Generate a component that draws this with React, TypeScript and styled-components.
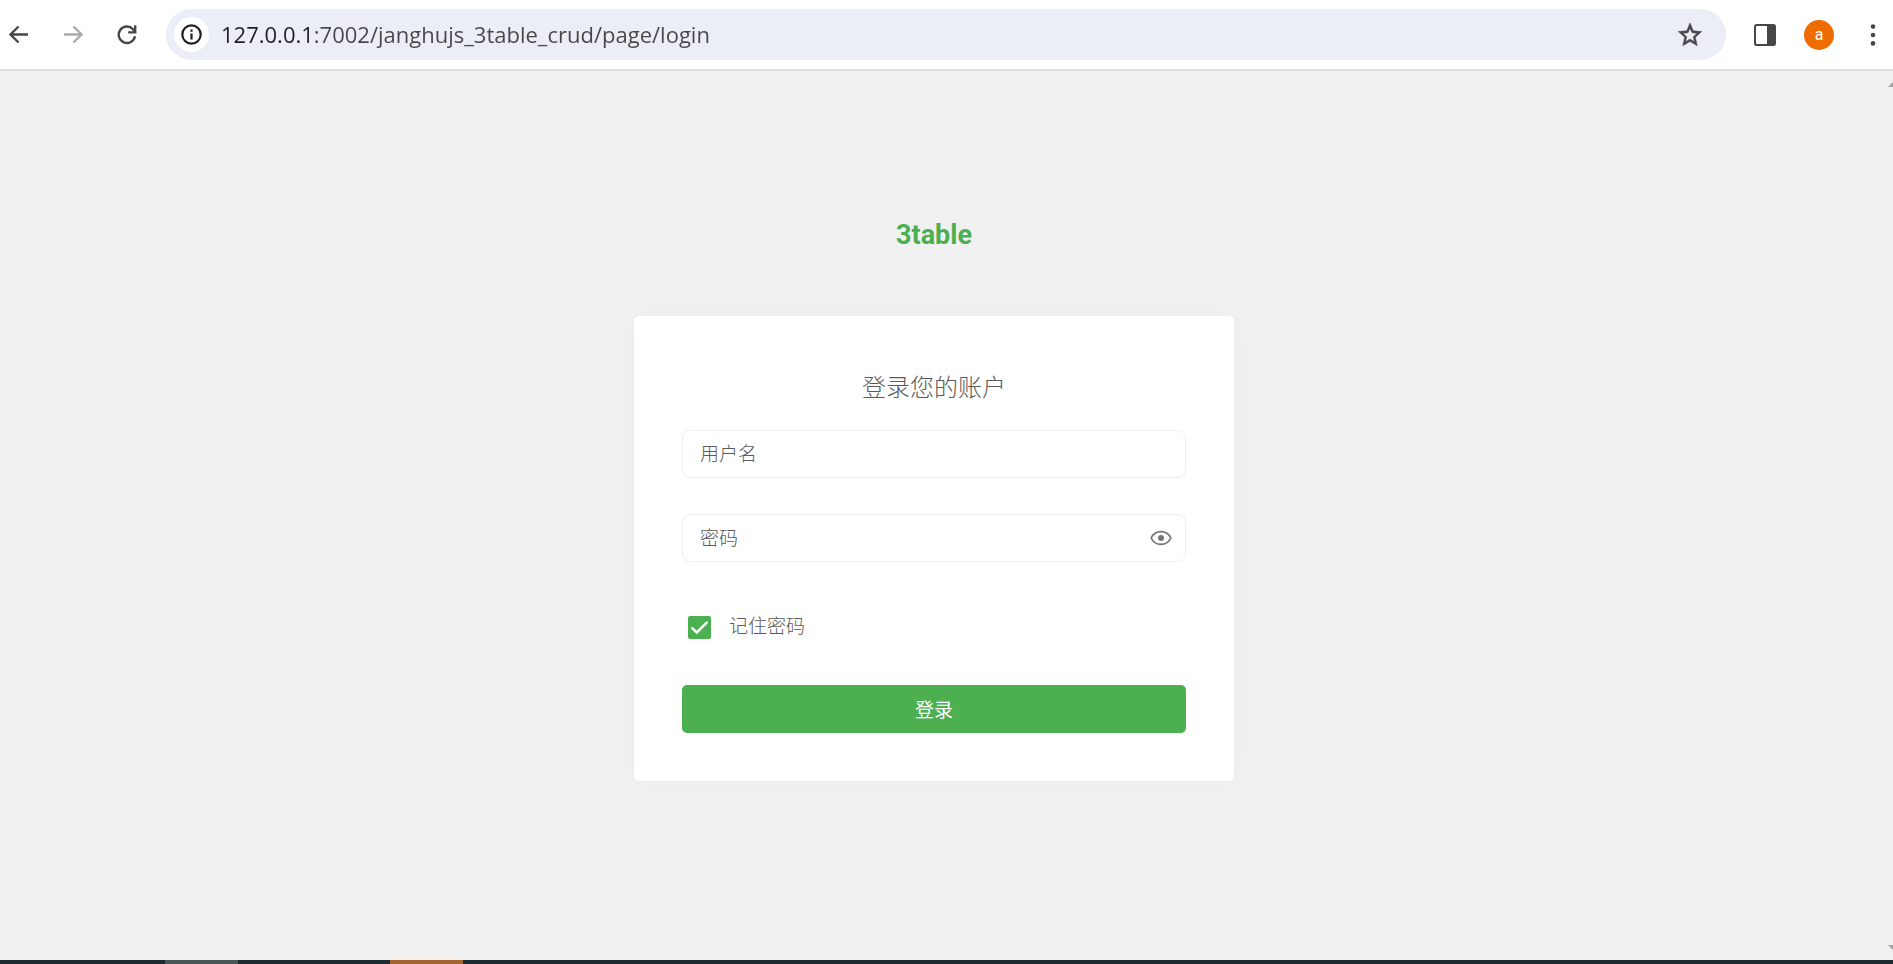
import React, { useState } from "react";
import styled, { createGlobalStyle } from "styled-components";

const GlobalStyle = createGlobalStyle`
  *, *::before, *::after { box-sizing: border-box; }
  html, body, #root { height: 100%; }
  body {
    margin: 0;
    background: #f1f1f1;
    color: #757575;
    font-family: Roboto, "Noto Sans CJK SC", sans-serif;
  }
  button, input { font: inherit; color: inherit; }
`;

const Browser = styled.div`
  display: flex;
  flex-direction: column;
  min-height: 100%;
`;

const Toolbar = styled.header`
  display: flex;
  align-items: center;
  gap: 24px;
  padding: 9px 5px 9px 4px;
  background: #fff;
  border-bottom: 2px solid #dfdfdf;
`;

const IconButton = styled.button<{ $muted?: boolean }>`
  display: flex;
  align-items: center;
  justify-content: center;
  flex: none;
  width: 30px;
  height: 30px;
  padding: 0;
  border: 0;
  background: none;
  color: ${(p) => (p.$muted ? "#ababab" : "#474747")};
  cursor: pointer;
`;

const Avatar = styled(IconButton)`
  border-radius: 50%;
  background: #ef6c00;
  color: #fff;
  font-size: 16px;
  line-height: 30px;
`;

const AddressBar = styled.div`
  display: flex;
  align-items: center;
  flex: 1;
  min-width: 0;
  height: 51px;
  padding: 0 21px 0 8px;
  border-radius: 26px;
  background: #ebeef7;
`;

const SiteInfo = styled(IconButton)`
  width: 35px;
  height: 35px;
  border-radius: 50%;
  background: #fff;
  color: #1f1f1f;
`;

const Address = styled.input`
  flex: 1;
  min-width: 0;
  height: 35px;
  margin: 0 12px;
  padding: 0 0 2px;
  border: 0;
  outline: 0;
  background: linear-gradient(to right, #1f1f1f 93px, #474747 93px);
  background-clip: text;
  -webkit-background-clip: text;
  color: transparent;
  font-family: "Open Sans", sans-serif;
  font-size: 22px;
`;

const Viewport = styled.div`
  display: flex;
  flex: 1;
`;

const Page = styled.main`
  display: flex;
  flex: 1;
  flex-direction: column;
  align-items: center;
  padding: 144px 13px 48px 0;
`;

const ScrollRail = styled.div`
  display: flex;
  flex-direction: column;
  justify-content: space-between;
  align-items: flex-end;
  width: 12px;
  padding: 11px 0 10px;
  background: #f0f0f0;
`;

const Brand = styled.h1`
  margin: 0 0 61px;
  color: #4caf50;
  font-size: 27px;
  font-weight: 700;
  line-height: 40px;
`;

const Card = styled.form`
  display: flex;
  flex-direction: column;
  width: 600px;
  max-width: 100%;
  padding: 48px;
  border-radius: 5px;
  background: #fff;
  box-shadow: 0 0 36px rgba(0, 0, 0, 0.03);
`;

const CardTitle = styled.h2`
  margin: 0 0 18px;
  color: #5a5a5a;
  font-size: 24px;
  font-weight: 300;
  line-height: 48px;
  text-align: center;
`;

const Field = styled.div`
  display: flex;
  align-items: center;
  height: 48px;
  margin-bottom: 36px;
  padding: 0 9px 0 17px;
  border: 1px solid #eee;
  border-radius: 8px;
`;

const TextInput = styled.input`
  flex: 1;
  min-width: 0;
  height: 40px;
  padding: 0;
  border: 0;
  outline: 0;
  background: none;
  font-size: 19px;
  font-weight: 300;
  &::placeholder {
    color: #5a5a5a;
    opacity: 1;
  }
`;

const EyeButton = styled(IconButton)`
  color: #757575;
`;

const Remember = styled.label`
  display: flex;
  align-items: center;
  gap: 18px;
  height: 40px;
  margin: 9px 0 38px;
  padding-left: 6px;
  color: #5a5a5a;
  font-size: 19px;
  font-weight: 300;
  line-height: 24px;
  cursor: pointer;
`;

const CheckBox = styled.span`
  display: grid;
  width: 23px;
  height: 23px;
  & > * {
    grid-area: 1 / 1;
  }
  svg {
    pointer-events: none;
  }
`;

const CheckInput = styled.input`
  appearance: none;
  width: 23px;
  height: 23px;
  margin: 0;
  border: 2px solid #757575;
  border-radius: 2px;
  &:checked {
    border-color: #4caf50;
    background: #4caf50;
  }
`;

const Submit = styled.button`
  height: 48px;
  padding: 0 0 2px;
  border: 0;
  border-radius: 5px;
  background: #4caf50;
  color: #fff;
  font-size: 19px;
  font-weight: 400;
  cursor: pointer;
`;

const Taskbar = styled.footer`
  display: flex;
  gap: 152px;
  height: 4px;
  padding-left: 165px;
  background: #1c2b30;
`;

const Task = styled.span<{ $color: string }>`
  width: 73px;
  background: ${(p) => p.$color};
`;

const ArrowIcon = ({ forward = false }: { forward?: boolean }) => (
  <svg width="28" height="28" viewBox="0 0 28 28" fill="none" stroke="currentColor" strokeWidth="2.4">
    {forward ? <path d="M5 13.5H22M14.5 5.5L22.5 13.5L14.5 21.5" /> : <path d="M23 13.5H6M13.5 5.5L5.5 13.5L13.5 21.5" />}
  </svg>
);

const ReloadIcon = () => (
  <svg width="28" height="28" viewBox="0 0 28 28" fill="none" stroke="currentColor" strokeWidth="2.4">
    <path d="M22 15.2A8.2 8.2 0 1 1 20 8.2L22 10.8" />
    <path d="M22.2 4.3V11.4H15.2" />
  </svg>
);

const InfoIcon = () => (
  <svg width="21" height="21" viewBox="0 0 21 21" fill="none" stroke="currentColor" strokeWidth="2.2">
    <circle cx="10.5" cy="10.5" r="9.2" />
    <path d="M10.5 9.4V15.4M10.5 5.5V7.7" />
  </svg>
);

const StarIcon = () => (
  <svg width="30" height="30" viewBox="0 0 24 24" fill="currentColor" stroke="currentColor" strokeWidth="0.4">
    <path d="M21.4 9.24l-6.8-.6L12 2.3 9.4 8.63 2.6 9.24l5.1 4.6L6.2 20.6 12 17.1l5.8 3.5-1.5-6.76 5.1-4.6zM12 15.2l-3.5 2.1.9-4-3.1-2.7 4.1-.4L12 6.5l1.6 3.7 4.1.4-3.1 2.7.9 4L12 15.2z" />
  </svg>
);

const PanelIcon = () => (
  <svg width="22" height="22" viewBox="0 0 22 22">
    <rect x="1" y="1" width="20" height="20" rx="1.8" fill="none" stroke="currentColor" strokeWidth="2" />
    <rect x="13" y="1" width="8" height="20" rx="1" fill="currentColor" />
  </svg>
);

const DotsIcon = () => (
  <svg width="6" height="24" viewBox="0 0 6 24" fill="currentColor">
    <circle cx="3" cy="3.6" r="2.3" />
    <circle cx="3" cy="12" r="2.3" />
    <circle cx="3" cy="20.4" r="2.3" />
  </svg>
);

const EyeIcon = () => (
  <svg width="24" height="24" viewBox="0 0 24 24" fill="none" stroke="currentColor" strokeWidth="1.8">
    <path d="M2.2 12C6 3.4 18 3.4 21.8 12C18 20.6 6 20.6 2.2 12Z" strokeLinejoin="round" />
    <circle cx="12" cy="12" r="3" fill="currentColor" stroke="none" />
  </svg>
);

const CheckIcon = () => (
  <svg width="23" height="23" viewBox="0 0 23 23" fill="none" stroke="#fff" strokeWidth="2.5">
    <path d="M3.6 11.6L8.8 16.4L19.4 5.8" />
  </svg>
);

const ScrollArrow = ({ down = false }: { down?: boolean }) => (
  <svg width="5" height="5" viewBox="0 0 5 5" fill="#a3a3a3">
    <path d={down ? "M0 0H5V5Z" : "M0 5H5V0Z"} />
  </svg>
);

export default function App() {
  const [url, setUrl] = useState("127.0.0.1:7002/janghujs_3table_crud/page/login");
  const [visible, setVisible] = useState(false);
  const [remember, setRemember] = useState(true);

  return (
    <Browser>
      <GlobalStyle />
      <Toolbar>
        <IconButton aria-label="后退"><ArrowIcon /></IconButton>
        <IconButton aria-label="前进" $muted><ArrowIcon forward /></IconButton>
        <IconButton aria-label="重新加载"><ReloadIcon /></IconButton>
        <AddressBar>
          <SiteInfo aria-label="网站信息"><InfoIcon /></SiteInfo>
          <Address
            aria-label="地址"
            spellCheck={false}
            value={url}
            onChange={(e) => setUrl(e.target.value)}
          />
          <IconButton aria-label="收藏"><StarIcon /></IconButton>
        </AddressBar>
        <IconButton aria-label="侧边栏"><PanelIcon /></IconButton>
        <Avatar aria-label="a">a</Avatar>
        <IconButton aria-label="菜单"><DotsIcon /></IconButton>
      </Toolbar>
      <Viewport>
        <Page>
          <Brand>3table</Brand>
          <Card onSubmit={(e) => e.preventDefault()}>
            <CardTitle>登录您的账户</CardTitle>
            <Field>
              <TextInput type="text" aria-label="用户名" placeholder="用户名" />
            </Field>
            <Field>
              <TextInput type={visible ? "text" : "password"} aria-label="密码" placeholder="密码" />
              <EyeButton type="button" aria-label="显示密码" onClick={() => setVisible(!visible)}>
                <EyeIcon />
              </EyeButton>
            </Field>
            <Remember>
              <CheckBox>
                <CheckInput
                  type="checkbox"
                  checked={remember}
                  onChange={(e) => setRemember(e.target.checked)}
                />
                {remember && <CheckIcon />}
              </CheckBox>
              记住密码
            </Remember>
            <Submit type="submit">登录</Submit>
          </Card>
        </Page>
        <ScrollRail>
          <ScrollArrow />
          <ScrollArrow down />
        </ScrollRail>
      </Viewport>
      <Taskbar>
        <Task $color="#4b5658" />
        <Task $color="#a4652f" />
      </Taskbar>
    </Browser>
  );
}
